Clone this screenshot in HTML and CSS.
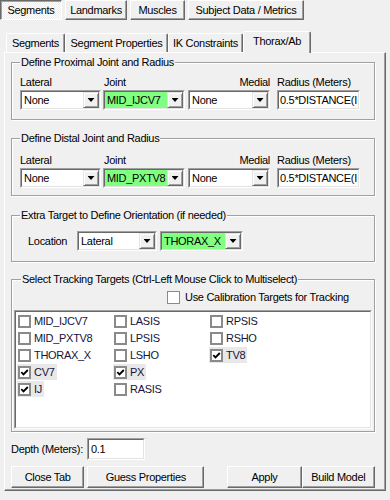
FILE: index.html
```html
<!DOCTYPE html>
<html>
<head>
<meta charset="utf-8">
<link rel="stylesheet" href="styles.css">
</head>
<body>
<div class="top-tabs">
  <div class="tbtn pressed w-seg">Segments</div>
  <div class="tbtn w-land">Landmarks</div>
  <div class="tbtn w-mus">Muscles</div>
  <div class="tbtn w-subj">Subject Data / Metrics</div>
</div>

<div class="tabstrip">
  <div class="tab t1">Segments</div>
  <div class="tab t2">Segment Properties</div>
  <div class="tab t3">IK Constraints</div>
  <div class="tab t4 active">Thorax/Ab</div>
</div>

<div class="panel">
  <fieldset class="group g1">
    <legend>Define Proximal Joint and Radius</legend>
    <div class="jrow">
      <div class="col c-lat"><div class="lbl">Lateral</div><div class="combo"><div class="combo-in"><span class="val">None</span><span class="drop"></span></div></div></div>
      <div class="col c-joint"><div class="lbl pl1">Joint</div><div class="combo"><div class="combo-in"><span class="val green">MID_IJCV7</span><span class="drop"></span></div></div></div>
      <div class="col c-med"><div class="lbl right">Medial</div><div class="combo"><div class="combo-in"><span class="val">None</span><span class="drop"></span></div></div></div>
      <div class="col c-rad"><div class="lbl">Radius (Meters)</div><div class="field"><div class="field-in">0.5*DISTANCE(I</div></div></div>
    </div>
  </fieldset>

  <fieldset class="group g2">
    <legend>Define Distal Joint and Radius</legend>
    <div class="jrow">
      <div class="col c-lat"><div class="lbl">Lateral</div><div class="combo"><div class="combo-in"><span class="val">None</span><span class="drop"></span></div></div></div>
      <div class="col c-joint"><div class="lbl pl1">Joint</div><div class="combo"><div class="combo-in"><span class="val green">MID_PXTV8</span><span class="drop"></span></div></div></div>
      <div class="col c-med"><div class="lbl right">Medial</div><div class="combo"><div class="combo-in"><span class="val">None</span><span class="drop"></span></div></div></div>
      <div class="col c-rad"><div class="lbl">Radius (Meters)</div><div class="field"><div class="field-in">0.5*DISTANCE(I</div></div></div>
    </div>
  </fieldset>

  <fieldset class="group g3">
    <legend>Extra Target to Define Orientation (if needed)</legend>
    <div class="orow">
      <div class="loc-lbl">Location</div>
      <div class="combo w-loc"><div class="combo-in"><span class="val">Lateral</span><span class="drop"></span></div></div>
      <div class="combo w-thx"><div class="combo-in"><span class="val green">THORAX_X</span><span class="drop"></span></div></div>
    </div>
  </fieldset>

  <fieldset class="group g4">
    <legend>Select Tracking Targets (Ctrl-Left Mouse Click to Multiselect)</legend>
    <div class="calrow"><span class="cb-plain"></span><span class="cal-text">Use Calibration Targets for Tracking</span></div>
    <div class="listbox">
      <div class="list-in">
        <div class="list-grid">
          <div class="item"><span class="cb"></span><span>MID_IJCV7</span></div>
          <div class="item"><span class="cb"></span><span>MID_PXTV8</span></div>
          <div class="item"><span class="cb"></span><span>THORAX_X</span></div>
          <div class="item sel"><span class="cb"><svg viewBox="0 0 9 9" width="9" height="9"><path d="M1.3 4.2 L3.5 6.4 L7.8 2" /></svg></span><span>CV7</span></div>
          <div class="item sel"><span class="cb"><svg viewBox="0 0 9 9" width="9" height="9"><path d="M1.3 4.2 L3.5 6.4 L7.8 2" /></svg></span><span>IJ</span></div>
          <div class="item"><span class="cb"></span><span>LASIS</span></div>
          <div class="item"><span class="cb"></span><span>LPSIS</span></div>
          <div class="item"><span class="cb"></span><span>LSHO</span></div>
          <div class="item sel"><span class="cb"><svg viewBox="0 0 9 9" width="9" height="9"><path d="M1.3 4.2 L3.5 6.4 L7.8 2" /></svg></span><span>PX</span></div>
          <div class="item"><span class="cb"></span><span>RASIS</span></div>
          <div class="item"><span class="cb"></span><span>RPSIS</span></div>
          <div class="item"><span class="cb"></span><span>RSHO</span></div>
          <div class="item sel"><span class="cb"><svg viewBox="0 0 9 9" width="9" height="9"><path d="M1.3 4.2 L3.5 6.4 L7.8 2" /></svg></span><span>TV8</span></div>
        </div>
      </div>
    </div>
  </fieldset>

  <div class="depth-row">
    <div class="depth-lbl">Depth (Meters):</div>
    <div class="field w-depth"><div class="field-in">0.1</div></div>
  </div>

  <div class="btn-row">
    <div class="btn w-close">Close Tab</div>
    <div class="btn w-guess">Guess Properties</div>
    <div class="btn w-apply">Apply</div>
    <div class="btn w-build">Build Model</div>
  </div>
</div>
</body>
</html>
```

FILE: styles.css
```css
* { box-sizing: border-box; }

html, body {
  margin: 0;
  padding: 0;
  background: #f0f0f0;
}

body {
  width: 390px;
  height: 500px;
  overflow: hidden;
  font-family: "Liberation Sans", Arial, sans-serif;
  font-size: 11px;
  line-height: 13px;
  letter-spacing: -0.3px;
  color: #000;
}

/* top button-style tabs */
.top-tabs {
  display: flex;
  gap: 3px;
  height: 20px;
}
.tbtn {
  height: 20px;
  line-height: 18px;
  text-align: center;
  white-space: nowrap;
  border: 1px solid;
  border-color: #fff #696969 #696969 #fff;
  box-shadow: inset -1px -1px #a0a0a0;
  background: #f0f0f0;
}
.tbtn.pressed {
  border-color: #696969 #fff #fff #696969;
  box-shadow: inset 1px 1px #a0a0a0;
  background: repeating-conic-gradient(#ffffff 0 25%, #ececec 0 50%) 0 0 / 2px 2px;
  line-height: 19px;
}
.w-seg { width: 62px; }
.w-land { width: 62px; }
.w-mus { width: 55px; }
.w-subj { width: 116px; }

/* inner tab strip */
.tabstrip {
  display: flex;
  align-items: flex-end;
  margin: 11px 0 0 6px;
  height: 21px;
}
.tab {
  height: 19px;
  padding-top: 3px;
  text-align: center;
  white-space: nowrap;
  border-top: 1px solid #fff;
  border-left: 1px solid #fff;
  border-right: 1px solid #696969;
  border-radius: 2px 2px 0 0;
  box-shadow: inset -1px 0 #a0a0a0;
  background: #f0f0f0;
}
.t1 { width: 59px; }
.t2 { width: 103px; }
.t3 { width: 75px; }
.t4 { width: 68px; }
.tab.active {
  height: 22px;
  margin-bottom: -1px;
  padding-top: 3px;
  position: relative;
  z-index: 1;
}

/* tab page */
.panel {
  margin-left: 4px;
  width: 382px;
  height: 439px;
  border-top: 1px solid #fff;
  border-left: 1px solid #fff;
  border-right: 1px solid #696969;
  border-bottom: 1px solid #696969;
  box-shadow: inset -1px -1px #a0a0a0;
  padding: 3px 10px 0 6px;
}

/* group boxes */
.group {
  margin: 0;
  border: 1px solid #a0a0a0;
  box-shadow: inset 1px 1px #fff, 1px 1px #fff;
  padding: 7px 8px 9px 8px;
  min-width: 0;
}
.group legend {
  padding: 0 1px;
  line-height: 13px;
  background: #f0f0f0;
  white-space: nowrap;
}
.g2 { margin-top: 12px; padding-top: 9px; padding-bottom: 7px; }
.g3 { margin-top: 13px; padding-top: 9px; padding-bottom: 10px; }
.g4 { margin-top: 11px; padding: 5px 1px 2px 1px; }
.g4 legend { margin-left: 8px; }

.jrow { display: flex; }
.col { display: flex; flex-direction: column; }
.c-lat { width: 81px; }
.c-joint { width: 82px; margin-left: 2px; }
.c-med { width: 82px; margin-left: 3px; }
.c-rad { width: 83px; margin-left: 7px; }
.lbl { height: 13px; white-space: nowrap; }
.lbl.pl1 { padding-left: 1px; }
.lbl.right { text-align: right; }
.col .combo, .col .field { margin-top: 1px; }

/* combo box */
.combo {
  height: 20px;
  border: 1px solid;
  border-color: #a0a0a0 #fff #fff #a0a0a0;
}
.combo-in {
  display: flex;
  height: 100%;
  border: 1px solid;
  border-color: #696969 #e3e3e3 #e3e3e3 #696969;
  background: #fff;
}
.val {
  flex: 1;
  min-width: 0;
  padding-left: 2px;
  line-height: 16px;
  white-space: nowrap;
  overflow: hidden;
  background: #fff;
}
.val.green { background: #80ff80; }
.drop {
  width: 16px;
  flex: none;
  display: flex;
  align-items: center;
  justify-content: center;
  border: 1px solid;
  border-color: #e3e3e3 #696969 #696969 #e3e3e3;
  box-shadow: inset 1px 1px #fff, inset -1px -1px #a0a0a0;
  background: #f0f0f0;
}
.drop::after {
  content: "";
  width: 7px;
  height: 4px;
  background: #000;
  clip-path: polygon(0 0, 100% 0, 50% 100%);
}

/* edit field */
.field {
  height: 20px;
  border: 1px solid;
  border-color: #a0a0a0 #fff #fff #a0a0a0;
}
.field-in {
  height: 100%;
  border: 1px solid;
  border-color: #696969 #e3e3e3 #e3e3e3 #696969;
  background: #fff;
  padding-left: 1px;
  line-height: 16px;
  white-space: nowrap;
  overflow: hidden;
}

/* orientation row */
.orow { display: flex; align-items: center; }
.loc-lbl { width: 49px; margin-left: 8px; }
.w-loc { width: 80px; }
.w-thx { width: 83px; margin-left: 3px; }

/* tracking targets */
.calrow {
  display: flex;
  align-items: center;
  height: 13px;
  margin-left: 154px;
}
.cb-plain {
  width: 13px;
  height: 13px;
  border: 1px solid #8a8a8a;
  background: #fff;
  flex: none;
}
.cal-text { margin-left: 5px; white-space: nowrap; }

.listbox {
  margin: 6px 1px 0 1px;
  height: 119px;
  border: 1px solid;
  border-color: #a0a0a0 #fff #fff #a0a0a0;
}
.list-in {
  height: 100%;
  border: 1px solid;
  border-color: #696969 #e3e3e3 #e3e3e3 #696969;
  background: #fff;
}
.list-grid {
  display: grid;
  grid-auto-flow: column;
  grid-template-rows: repeat(5, 17px);
  grid-template-columns: repeat(3, 96px);
  padding-left: 1px;
}
.item {
  justify-self: start;
  display: flex;
  align-items: center;
  gap: 3px;
  height: 16px;
  margin-top: 1px;
  padding: 0 2px 0 1px;
  color: #14143a;
  white-space: nowrap;
}
.item.sel { background: #e8e8e8; }
.cb {
  width: 13px;
  height: 13px;
  border: 2px solid #8a8a8a;
  background: #fff;
  flex: none;
  display: flex;
  align-items: center;
  justify-content: center;
}
.cb svg path {
  fill: none;
  stroke: #000;
  stroke-width: 1.9;
}

/* bottom rows */
.depth-row {
  display: flex;
  align-items: center;
  margin-top: 6px;
}
.depth-lbl { width: 76px; white-space: nowrap; }
.w-depth { width: 58px; height: 22px; }
.w-depth .field-in { line-height: 18px; padding-left: 2px; }

.btn-row {
  display: flex;
  margin-top: 6px;
}
.btn {
  height: 22px;
  line-height: 20px;
  text-align: center;
  white-space: nowrap;
  border: 1px solid;
  border-color: #fff #696969 #696969 #fff;
  box-shadow: inset -1px -1px #a0a0a0;
  background: #f0f0f0;
}
.w-close { width: 74px; }
.w-guess { width: 118px; margin-left: 3px; }
.w-apply { width: 75px; margin-left: 23px; }
.w-build { width: 74px; }
```
